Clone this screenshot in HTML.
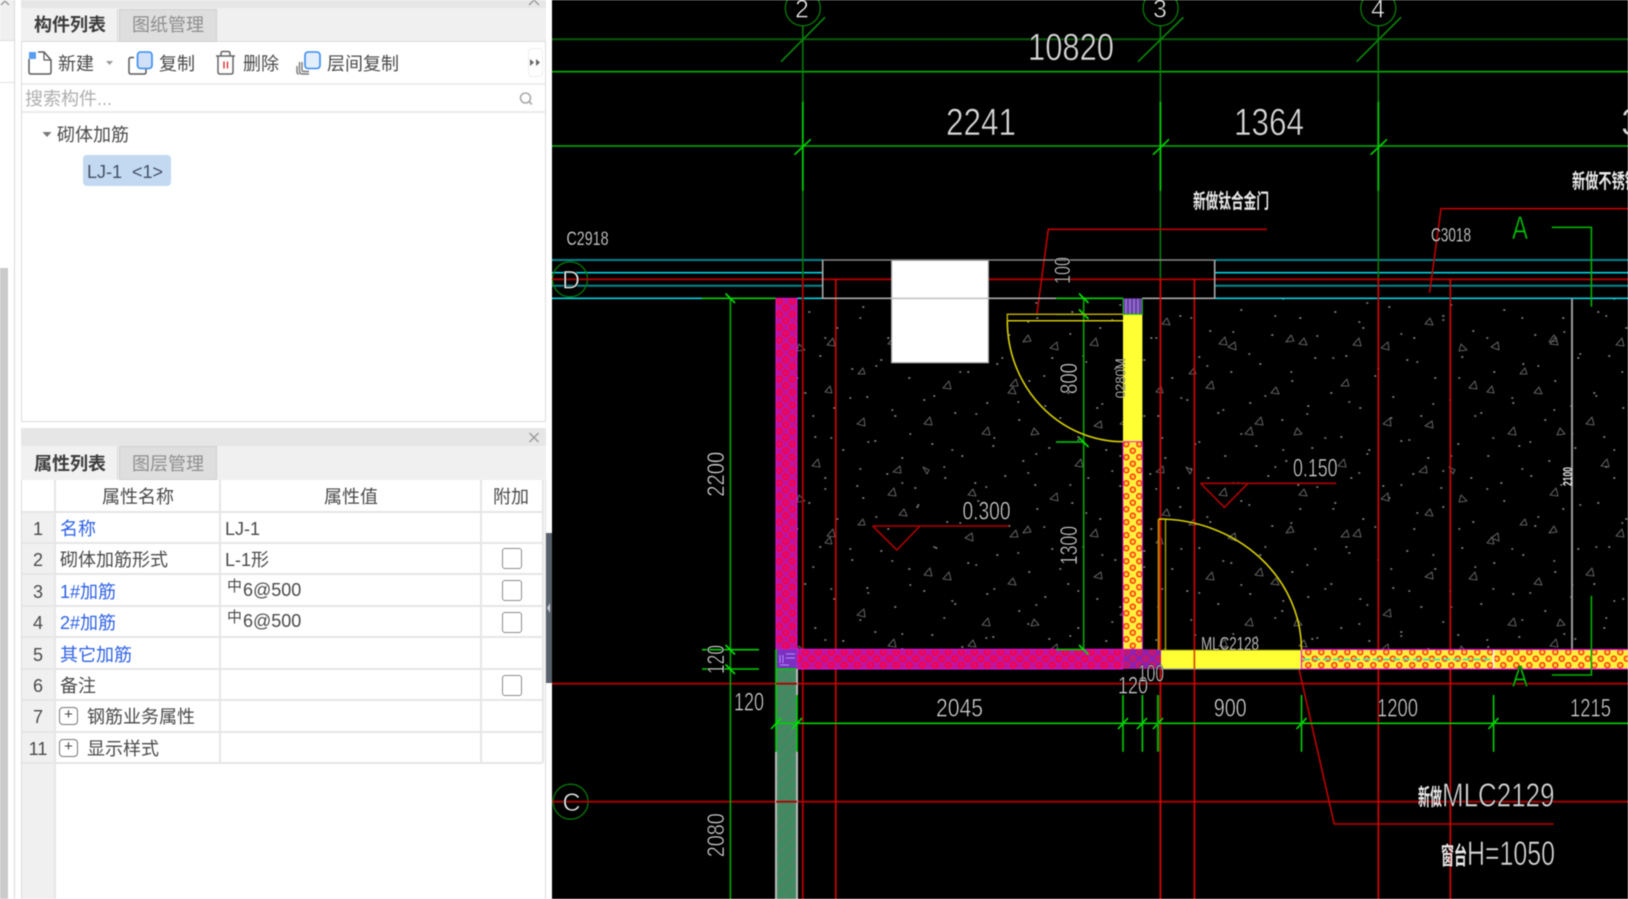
<!DOCTYPE html>
<html lang="zh"><head><meta charset="utf-8"><title>构件列表</title>
<style>
html,body{margin:0;padding:0;width:1628px;height:899px;overflow:hidden;background:#fff}
#w{position:absolute;left:0;top:0;width:1628px;height:899px;overflow:hidden;filter:blur(.5px);font-family:"Liberation Sans","Noto Sans CJK SC",sans-serif;font-size:18px;color:#4a4a4a}
#w div{position:absolute;box-sizing:border-box}
.t{white-space:nowrap;line-height:24px;height:24px}
.b{color:#2f62e6}
.g{color:#8e8e8e}
.r{background:#e6e6e6;height:2px;left:22px;width:520px}
.c{background:#e6e6e6;width:2px;top:480px;height:283px}
.n{left:22px;width:32px;text-align:center}
.cb{left:502px;width:20px;height:21px;border:1.5px solid #8c8c8c;border-radius:3px;background:#fff}
.pb{left:59px;width:19px;height:18px;border:1.5px solid #777;border-radius:4px;text-align:center;line-height:14px;font-size:15px;color:#444}
svg{position:absolute;left:0;top:0}
svg text{font-family:"Liberation Sans","Noto Sans CJK SC",sans-serif;fill:#d8d8d8;stroke:#000;stroke-width:.6}
svg text.s{stroke-width:.25}
svg text.k{stroke:none;fill:#e8e8e8;font-weight:700}
</style></head><body><div id="w">
<div style="left:0;top:0;width:14px;height:40px;background:#f0f0f0"></div>
<div style="left:0;top:40px;width:14px;height:1px;background:#ddd"></div>
<div style="left:0;top:82px;width:14px;height:1px;background:#e2e2e2"></div>
<div style="left:14px;top:0;width:1px;height:899px;background:#d8d8d8"></div>
<div style="left:0;top:268px;width:8px;height:631px;background:#cacaca"></div>

<div style="left:21px;top:0;width:525px;height:422px;background:#fff;border:1px solid #dcdcdc"></div>
<div style="left:21px;top:0;width:525px;height:8px;background:#e6e6e6"></div>
<div style="left:21px;top:8px;width:525px;height:34px;background:#f0f0f0;border-bottom:1px solid #dcdcdc"></div>
<div style="left:22px;top:9px;width:96px;height:32px;background:#f1f1f1;border-right:1px solid #d8d8d8"></div>
<div style="left:119px;top:9px;width:98px;height:33px;background:#dedede;border:1px solid #d0d0d0"></div>
<div class="t" style="left:34px;top:13px;font-weight:700;color:#3c3c3c">构件列表</div>
<div class="t g" style="left:132px;top:13px">图纸管理</div>
<div style="left:22px;top:83px;width:523px;height:2px;background:#ececec"></div>
<div style="left:22px;top:111px;width:523px;height:2px;background:#ececec"></div>
<div class="t" style="left:58px;top:52px">新建</div>
<div class="t" style="left:159px;top:52px">复制</div>
<div class="t" style="left:243px;top:52px">删除</div>
<div class="t" style="left:327px;top:52px">层间复制</div>
<div style="left:528px;top:48px;width:15px;height:29px;background:#fff;border:1px solid #eee;border-radius:4px"></div>
<div class="t" style="left:25px;top:87px;color:#aeaeae">搜索构件...</div>
<div class="t" style="left:57px;top:123px">砌体加筋</div>
<div style="left:83px;top:155px;width:88px;height:31px;background:#c2d9f1;border-radius:4px"></div>
<div class="t" style="left:87px;top:160px;color:#455065">LJ-1&nbsp; &lt;1&gt;</div>

<div style="left:21px;top:428px;width:525px;height:471px;background:#fff;border-left:1px solid #dcdcdc;border-right:1px solid #dcdcdc"></div>
<div style="left:21px;top:428px;width:525px;height:18px;background:#e6e6e6"></div>
<div style="left:21px;top:446px;width:525px;height:34px;background:#f0f0f0"></div>
<div style="left:22px;top:447px;width:96px;height:32px;background:#f1f1f1;border-right:1px solid #d8d8d8"></div>
<div style="left:119px;top:446px;width:98px;height:34px;background:#dedede;border:1px solid #d0d0d0"></div>
<div class="t" style="left:34px;top:452px;font-weight:700;color:#3c3c3c">属性列表</div>
<div class="t g" style="left:132px;top:452px">图层管理</div>
<div style="left:22px;top:512px;width:32px;height:387px;background:#f0f0f0"></div>
<div class="c" style="left:54px;height:419px"></div><div class="c" style="left:219px"></div><div class="c" style="left:480px"></div><div class="c" style="left:542px"></div>
<div class="r" style="top:511px"></div><div class="r" style="top:542px"></div><div class="r" style="top:573px"></div><div class="r" style="top:605px"></div><div class="r" style="top:636px"></div><div class="r" style="top:668px"></div><div class="r" style="top:699px"></div><div class="r" style="top:731px"></div><div class="r" style="top:762px"></div>

<div class="t" style="left:102px;top:485px">属性名称</div>
<div class="t" style="left:324px;top:485px">属性值</div>
<div class="t" style="left:493px;top:485px">附加</div>

<div class="t n" style="top:517px">1</div>
<div class="t n" style="top:548px">2</div>
<div class="t n" style="top:580px">3</div>
<div class="t n" style="top:611px">4</div>
<div class="t n" style="top:643px">5</div>
<div class="t n" style="top:674px">6</div>
<div class="t n" style="top:705px">7</div>
<div class="t n" style="top:737px">11</div>

<div class="t b" style="left:60px;top:517px">名称</div>
<div class="t" style="left:60px;top:548px">砌体加筋形式</div>
<div class="t b" style="left:60px;top:580px">1#加筋</div>
<div class="t b" style="left:60px;top:611px">2#加筋</div>
<div class="t b" style="left:60px;top:643px">其它加筋</div>
<div class="t" style="left:60px;top:674px">备注</div>
<div class="pb" style="top:707px">+</div>
<div class="t" style="left:87px;top:705px">钢筋业务属性</div>
<div class="pb" style="top:739px">+</div>
<div class="t" style="left:87px;top:737px">显示样式</div>

<div class="t" style="left:225px;top:517px">LJ-1</div>
<div class="t" style="left:225px;top:548px">L-1形</div>
<div class="t" style="left:227px;top:575px;font-size:15px">中</div>
<div class="t" style="left:243px;top:578px">6@500</div>
<div class="t" style="left:227px;top:606px;font-size:15px">中</div>
<div class="t" style="left:243px;top:609px">6@500</div>

<div class="cb" style="top:548px"></div>
<div class="cb" style="top:580px"></div>
<div class="cb" style="top:612px"></div>
<div class="cb" style="top:675px"></div>

<div style="left:546px;top:533px;width:6px;height:150px;background:#59626c"></div>

<svg width="1628" height="899" viewBox="0 0 1628 899" xmlns="http://www.w3.org/2000/svg">
<defs>
<pattern id="c1" patternUnits="userSpaceOnUse" x="797" y="298" width="263" height="191">
<path fill="none" stroke="#858585" stroke-width="1.8" stroke-linecap="round" d="M12 14h.6M40 30h.6M66 9h.6M91 40h.6M120 18h.6M150 33h.6M181 12h.6M212 37h.6M240 20h.6M23 58h.6M55 71h.6M84 62h.6M112 80h.6M139 59h.6M171 74h.6M200 66h.6M232 83h.6M255 60h.6M8 95h.6M37 110h.6M70 99h.6M98 118h.6M127 102h.6M158 115h.6M190 105h.6M222 122h.6M248 108h.6M18 139h.6M46 152h.6M78 143h.6M105 160h.6M135 146h.6M165 158h.6M196 148h.6M226 163h.6M252 150h.6M28 180h.6M60 188h.6M90 176h.6M118 190h.6M148 180h.6M178 185h.6M208 178h.6M238 187h.6"/>
<path fill="none" stroke="#5c5c5c" stroke-width="1.1" stroke-linejoin="round" d="M30 47l6 -7 2 8zM102 26l5 -6 3 7zM168 49l7 -5 1 8zM226 44l5 -7 3 6zM60 126l7 -6 1 8zM146 90l6 -7 2 8zM211 95l5 -6 3 7zM15 168l6 -7 2 8zM96 174l7 -6 1 7zM185 136l6 -7 2 8zM242 136l-5 -6 -3 7zM132 172l-6 -3 4 7z"/>
</pattern>
<pattern id="c2" patternUnits="userSpaceOnUse" x="840" y="310" width="331" height="151">
<path fill="none" stroke="#7c7c7c" stroke-width="1.7" stroke-linecap="round" d="M20 8h.6M62 22h.6M104 6h.6M146 26h.6M188 12h.6M230 24h.6M272 10h.6M316 28h.6M36 56h.6M78 44h.6M120 62h.6M162 48h.6M204 66h.6M246 52h.6M288 68h.6M10 88h.6M52 100h.6M94 86h.6M136 104h.6M178 92h.6M220 108h.6M262 94h.6M304 106h.6M28 132h.6M70 124h.6M112 140h.6M154 128h.6M196 144h.6M238 130h.6M280 146h.6M322 128h.6"/>
<path fill="none" stroke="#5c5c5c" stroke-width="1.1" stroke-linejoin="round" d="M48 34l6 -7 2 8zM128 34l5 -6 3 7zM210 38l7 -6 1 8zM296 40l-6 -6 -2 7zM84 114l6 -7 2 8zM170 76l6 -7 2 7zM254 116l7 -5 1 7zM18 64l5 -6 2 6zM316 82l5 -6 2 7z"/>
</pattern>
<pattern id="mg" patternUnits="userSpaceOnUse" x="776" y="649" width="13" height="13">
<rect width="13" height="13" fill="#c014a0"/>
<circle cx="3.3" cy="3.2" r="2.6" fill="#d01090" stroke="#ff0030" stroke-width="1.6"/>
<circle cx="9.8" cy="9.700" r="2.6" fill="#d01090" stroke="#ff0030" stroke-width="1.6"/>
</pattern>
<pattern id="or" patternUnits="userSpaceOnUse" x="1123" y="649" width="13" height="13">
<rect width="13" height="13" fill="#fff03c"/>
<circle cx="3.3" cy="3.2" r="2.5" fill="#ffd030" stroke="#ff3010" stroke-width="1.4"/>
<circle cx="9.8" cy="9.700" r="2.5" fill="#ffd030" stroke="#ff3010" stroke-width="1.4"/>
</pattern>
<pattern id="pu" patternUnits="userSpaceOnUse" x="1123" y="649" width="13" height="13">
<rect width="13" height="13" fill="#9020b0"/>
<circle cx="3.3" cy="3.2" r="2.6" fill="#a0209a" stroke="#e81040" stroke-width="1.4"/>
<circle cx="9.8" cy="9.700" r="2.6" fill="#a0209a" stroke="#e81040" stroke-width="1.4"/>
</pattern>
<pattern id="hc" patternUnits="userSpaceOnUse" width="12" height="12">
<rect width="12" height="12" fill="#408a62"/>
<path d="M-2 14L14 -2M-8 8L8 -8M4 20L20 4" stroke="#5e7c66" stroke-width="1.3"/>
</pattern>
</defs>

<!-- toolbar icons -->
<g fill="none" stroke-linejoin="round">
<path stroke="#5a5a5a" stroke-width="1.5" d="M29 59v13q0 2 2 2h18q2 0 2-2V60l-7-8H38"/>
<path stroke="#5a5a5a" stroke-width="1.2" d="M44 52v8h7"/>
<rect x="29" y="52" width="7" height="7" fill="#5a9cf2" stroke="none"/>
<path stroke="#5a5a5a" stroke-width="1.5" d="M134 57.500h-3q-2 0-2 2v12.500q0 2 2 2h13q2 0 2-2v-3"/>
<rect x="137.500" y="52" width="14.500" height="16.500" rx="3" fill="#cfe0f8" stroke="#3a8cf0" stroke-width="1.6"/>
<path stroke="#666" stroke-width="1.5" d="M216 56h19M221 56v-2.500q0-2 2-2h5q2 0 2 2V56M218 56v16q0 2 2 2h11q2 0 2-2V56"/>
<path stroke="#e02020" stroke-width="1.3" d="M224 61.500v7M227.500 61.500v7"/>
<path stroke="#777" stroke-width="1.4" d="M302 62v8q0 1.500 1.500 1.500H309M299.500 62v9q0 3 3 3h6.500M297 66v6q0 2 2 2"/>
<rect x="305" y="52" width="15" height="16.500" rx="3" fill="#e2eefc" stroke="#3a8cf0" stroke-width="1.6"/>
<circle cx="525.500" cy="98" r="5" stroke="#aaa" stroke-width="1.6"/>
<path stroke="#aaa" stroke-width="1.6" d="M529 101.500l3 3"/>
<path stroke="#999" stroke-width="1.4" d="M529.500 433l9 9M538.500 433l-9 9"/>
<path stroke="#999" stroke-width="1.4" d="M529 5l5 -5M539 5l-5 -5M1 5l4 -4M9 5l-4 -4"/>
</g>
<path fill="#999" d="M106 61h7l-3.500 4z"/>
<path fill="#777" d="M42.500 132h9l-4.500 5z"/>
<path fill="#666" d="M530 59l4 3.500 -4 3.500zM536 59l4 3.500 -4 3.500z"/>
<path fill="#ccd" d="M550 603l-3 5 3 5z"/>

<!-- CAD -->
<rect x="552" y="0" width="1076" height="899" fill="#000"/>
<rect x="797" y="298" width="831" height="352" fill="url(#c1)"/>
<rect x="797" y="298" width="831" height="352" fill="url(#c2)"/>

<g fill="none" stroke-width="1.6">
<path stroke="#0a5a0a" stroke-width="2" d="M552 39.300H1628"/>
<path stroke="#00b400" d="M552 71.700H1628M552 146H1628"/>
<path stroke="#00868e" stroke-width="2" d="M552 260H823M1215 260H1628M552 285.700H823M1215 285.700H1628"/>
<path stroke="#00d0de" d="M552 272.700H823M1215 272.700H1628M552 298.300H702M797 298.300H823M1215 298.300H1628"/>
<path stroke="#00d000" d="M702 298.300H776M1056 298.300H1123"/>
<path stroke="#087a08" d="M802.800 26V279M1160.400 26V279M1378.300 26V279"/>
<path stroke="#00c800" stroke-width="1.8" d="M802.800 101.700V190.700M1160.400 101.700V190.700M1378.300 101.700V190.700"/>
<path stroke="#0a8a0a" d="M825 17.300L781 61.700M1183.400 17.300L1138 61.700M1401 17.300L1356.600 61.700"/>
<path stroke="#00d800" d="M810.700 139.300L794.500 154.700M1169 139.300L1153 154.700M1387 139.300L1370.600 154.700"/>
<g stroke="#087a08" stroke-width="1.3">
<circle cx="802.800" cy="8.300" r="17.500"/>
<circle cx="1160.600" cy="8.300" r="17.500"/>
<circle cx="1378.300" cy="8.300" r="17.500"/>
<circle cx="570" cy="279.300" r="17.500"/>
<circle cx="570.600" cy="801.700" r="17.500"/>
</g>
<path stroke="#b00000" stroke-width="1.8" d="M552 279.300H1628M552 683.700H1628M552 801.700H1628"/>
<path stroke="#a80000" stroke-width="2" d="M802.800 279V899"/>
<path stroke="#d80000" d="M835.800 279V899M1160.400 279V899M1194.400 279V899M1378.300 279V899M1450.300 279V899"/>
<path stroke="#c00000" d="M1037 313.300L1048.300 229.300H1267M1429.600 292.700L1441 208.700H1628M1299 669L1334.200 824H1553.600"/>
<path stroke="#b00000" d="M872.700 526H1008.700M872.700 526L896.800 550L920 526M1200.600 483.300H1336.300M1200.600 483.300L1224.400 507.300L1248 483.300"/>
</g>

<rect x="891.600" y="260" width="96.800" height="102.700" fill="#fff" stroke="#a8a8a8" stroke-width="1.200"/>
<g fill="none" stroke-width="1.6">
<path stroke="#888" d="M822.700 260H1214.700"/>
<path stroke="#aaa" d="M822.700 260V298.300H1056M1142 298.300H1214.700V260"/>
<path stroke="#c8c8c8" d="M891.600 298.300H988.400"/>
<path stroke="#999" stroke-width="2" d="M1572 298.300V650"/>
</g>

<!-- walls -->
<rect x="776" y="298.300" width="21" height="351" fill="url(#mg)" stroke="#e010d8" stroke-width="1"/>
<rect x="797" y="649.300" width="326" height="19.700" fill="url(#mg)" stroke="#e810e8" stroke-width="1"/>
<rect x="776" y="649.300" width="21" height="19.700" fill="#7a30c0"/>
<path stroke="#b090ff" stroke-width="1" fill="none" d="M780 655v8M783 655v8M786 654h9M786 658h9M780 665h9"/>
<rect x="776" y="669" width="21" height="230" fill="url(#hc)"/>
<path fill="none" stroke="#00d000" stroke-width="1.600" d="M776 649V751.700M797 695V751.700M776 669H797"/>
<path fill="none" stroke="#bbb" stroke-width="2" d="M776 751.700V899M797 751.700V899M797 669V695"/>
<path stroke="#b00000" stroke-width="1.8" d="M776 683.700H797M776 801.700H797"/>

<rect x="1123" y="314.300" width="19.400" height="127.400" fill="#ffff33"/>
<rect x="1123" y="441.700" width="19.400" height="207.600" fill="url(#or)" stroke="#e818e0" stroke-width="1"/>
<rect x="1123" y="298.300" width="19.400" height="16" fill="#7040b0"/>
<path fill="none" stroke="#a090d0" stroke-width="1" d="M1126 299v15M1130 299v15M1134 299v15M1138 299v15"/>
<path fill="none" stroke="#00c000" stroke-width="1" d="M1123 298.300v16h19.400V298.300"/>
<rect x="1123" y="649.300" width="38" height="19.700" fill="url(#pu)"/>
<rect x="1161" y="650" width="140.500" height="19" fill="#ffff33"/>
<path fill="none" stroke="#999" stroke-width="1.2" d="M1161 669H1301"/>
<path fill="none" stroke="#888800" stroke-width="1" d="M1161 650H1301"/>
<rect x="1301.500" y="649.500" width="327" height="19.500" fill="url(#or)" stroke="#e818e0" stroke-width="1.2"/>
<path fill="none" stroke="#60e0a0" stroke-width="2" stroke-dasharray="7 3" d="M1303 659.500H1492"/>
<path fill="none" stroke="#fff" stroke-width="1.500" d="M1493.600 650V668"/>
<path fill="none" stroke="#d80000" stroke-width="1.600" d="M1160.400 279V650M1160.400 669V899"/>
<path fill="none" stroke="#d04000" stroke-width="1.600" d="M1194.400 650V669"/>

<!-- dims & door -->
<g fill="none" stroke-width="1.6">
<path stroke="#00a800" d="M730.400 298.300V899M1083.700 298.300V649.500"/>
<path stroke="#00d000" d="M702 649.700H759M702 669H759M775.600 723.300H1628M1056 314.300H1084M1056 442H1084M1056 649.500H1084"/>
<path stroke="#00e000" d="M725.500 293.500L735 303M725.500 645L735 654.500M725.500 664.500L735 674M1079 293.500L1088.500 303M1079 309.500L1088.500 319M1079 437.500L1088.500 447M1079 645L1088.500 654.500"/>
<path stroke="#00e000" d="M781 718L771 729M802 718L792 729M1128 718L1118 729M1147 718L1137 729M1163 718L1153 729M1306.500 718L1296.500 729M1498.500 718L1488.500 729"/>
<path stroke="#00d000" d="M1123 695V751.700M1142.400 695V751.700M1493.600 695V751.700M1301.500 695V751.700"/>
<path stroke="#00b000" stroke-width="2.200" d="M1158 695V751.700"/>
<path stroke="#00b000" d="M1551.800 227.300H1591.400V306.700M1551.800 675H1591.400V595.700"/>
<path stroke="#b8a800" stroke-width="1.500" d="M1007.300 320.700V314.300H1123"/>
<path stroke="#d0c800" stroke-width="1.500" d="M1007.300 320.700H1123"/>
<path stroke="#d8d000" stroke-width="1.600" d="M1007.300 320.700A116 121 0 0 0 1123 441.700"/>
<path stroke="#b08800" stroke-width="2" d="M1158.600 519V650"/>
<path stroke="#a09800" stroke-width="1.500" d="M1165.500 519.300V650"/>
<path stroke="#d8d000" stroke-width="1.600" d="M1158.600 519A143 131 0 0 1 1301.500 650"/>
</g>

<!-- CAD text -->
<text x="1028" y="60" font-size="38" textLength="86" lengthAdjust="spacingAndGlyphs">10820</text>
<text x="946" y="135" font-size="38" textLength="70" lengthAdjust="spacingAndGlyphs">2241</text>
<text x="1234" y="135" font-size="38" textLength="70" lengthAdjust="spacingAndGlyphs">1364</text>
<text x="1621" y="135" font-size="38">3</text>
<text class="s" x="566.500" y="245" font-size="19" textLength="42" lengthAdjust="spacingAndGlyphs">C2918</text>
<text class="s" x="1431" y="241.700" font-size="19" textLength="40" lengthAdjust="spacingAndGlyphs">C3018</text>
<text class="k" x="1193" y="208" font-size="20" textLength="76" lengthAdjust="spacingAndGlyphs">新做钛合金门</text>
<text class="k" x="1572" y="188" font-size="20" textLength="66" lengthAdjust="spacingAndGlyphs">新做不锈钢</text>
<text x="962.500" y="519.300" font-size="25" textLength="48" lengthAdjust="spacingAndGlyphs">0.300</text>
<text x="1293" y="476.700" font-size="25" textLength="44.600" lengthAdjust="spacingAndGlyphs">0.150</text>
<text x="936" y="716.700" font-size="25" textLength="47" lengthAdjust="spacingAndGlyphs">2045</text>
<text x="1213.700" y="716.700" font-size="25" textLength="33" lengthAdjust="spacingAndGlyphs">900</text>
<text x="1377" y="716.700" font-size="25" textLength="41" lengthAdjust="spacingAndGlyphs">1200</text>
<text x="1570" y="716.700" font-size="25" textLength="41" lengthAdjust="spacingAndGlyphs">1215</text>
<text x="734" y="710.700" font-size="25" textLength="30" lengthAdjust="spacingAndGlyphs">120</text>
<text x="1118" y="693.300" font-size="24" textLength="30" lengthAdjust="spacingAndGlyphs">120</text>
<text x="1138" y="681.700" font-size="24" textLength="26" lengthAdjust="spacingAndGlyphs">100</text>
<text class="s" x="1201" y="650" font-size="18" textLength="58" lengthAdjust="spacingAndGlyphs">MLC2128</text>
<text class="k" x="1418" y="805" font-size="23" textLength="24" lengthAdjust="spacingAndGlyphs">新做</text>
<text x="1442" y="806.700" font-size="33" textLength="112.500" lengthAdjust="spacingAndGlyphs">MLC2129</text>
<text class="k" x="1441" y="864" font-size="24" textLength="26" lengthAdjust="spacingAndGlyphs">窗台</text>
<text x="1467" y="865" font-size="34" textLength="88" lengthAdjust="spacingAndGlyphs">H=1050</text>
<text transform="translate(724 496.700) rotate(-90)" font-size="24" textLength="45" lengthAdjust="spacingAndGlyphs">2200</text>
<text transform="translate(724 674) rotate(-90)" font-size="24" textLength="29" lengthAdjust="spacingAndGlyphs">120</text>
<text transform="translate(724 857.300) rotate(-90)" font-size="24" textLength="44" lengthAdjust="spacingAndGlyphs">2080</text>
<text transform="translate(1077 565) rotate(-90)" font-size="24" textLength="39" lengthAdjust="spacingAndGlyphs">1300</text>
<text transform="translate(1077 394) rotate(-90)" font-size="24" textLength="31" lengthAdjust="spacingAndGlyphs">800</text>
<text transform="translate(1070 284) rotate(-90)" font-size="22" textLength="27" lengthAdjust="spacingAndGlyphs">100</text>
<text class="s" transform="translate(1125 398.300) rotate(-90)" font-size="14" textLength="40" lengthAdjust="spacingAndGlyphs">0280M</text>
<text class="k" transform="translate(1572 486) rotate(-90)" font-size="13" textLength="19" lengthAdjust="spacingAndGlyphs">2100</text>
<text x="562" y="288.300" font-size="25" style="fill:#eee">D</text>
<text x="562.500" y="811" font-size="25" style="fill:#eee">C</text>
<text x="795" y="17.300" font-size="25" style="fill:#eee">2</text>
<text x="1153" y="17.300" font-size="25" style="fill:#eee">3</text>
<text x="1371" y="17.300" font-size="25" style="fill:#eee">4</text>
<text x="1512" y="239" font-size="32" textLength="16" lengthAdjust="spacingAndGlyphs" style="fill:#00c000">A</text>
<text x="1512" y="686.700" font-size="30" textLength="16" lengthAdjust="spacingAndGlyphs" style="fill:#00c000">A</text>
</svg>
</div></body></html>
